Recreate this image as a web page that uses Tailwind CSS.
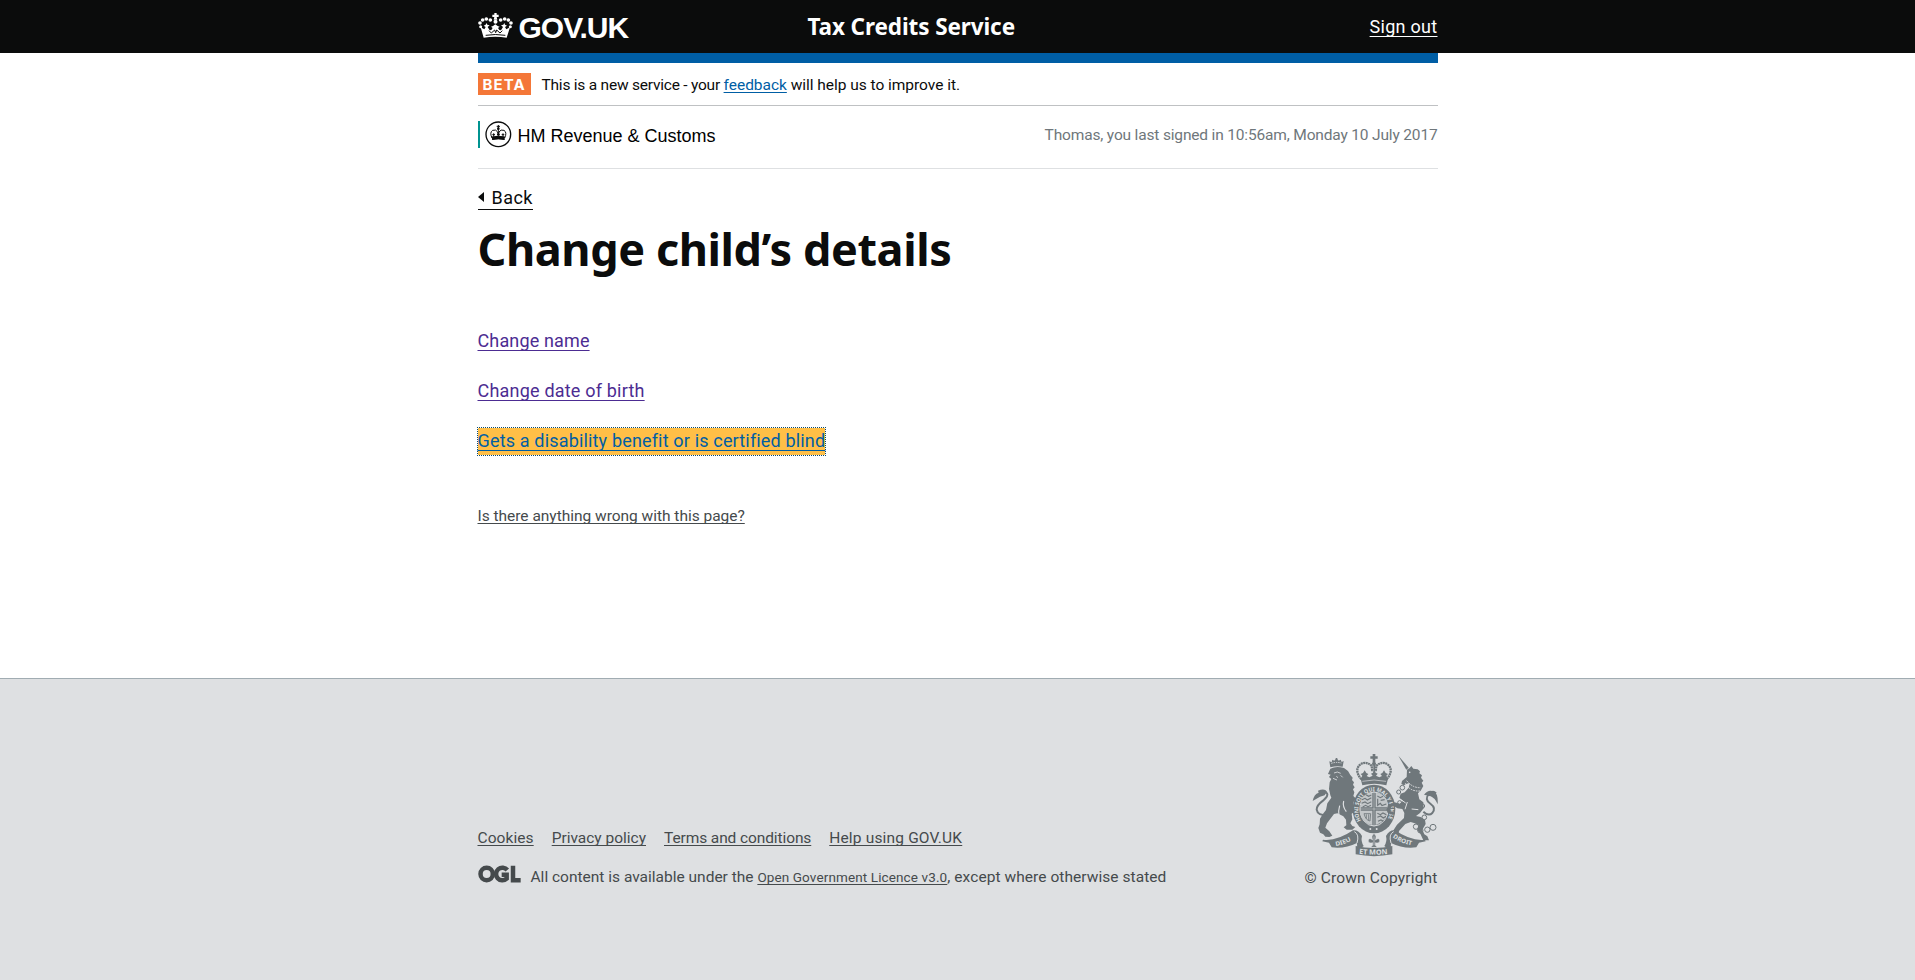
<!DOCTYPE html>
<html lang="en">
<head>
<meta charset="utf-8">
<title>Change child’s details</title>
<script src="https://cdn.jsdelivr.net/npm/@tailwindcss/browser@4"></script>
</head>
<body class="bg-white text-[#0b0c0c] font-[Roboto,sans-serif] text-[15.5px]">
<header class="bg-[#0b0c0c] text-white h-[53px]">
  <div class="w-[960px] mx-auto h-full flex items-center">
    <a class="w-[330px] flex items-center gap-[6px]">
      <svg class="w-[35px] h-[28px] shrink-0 -mt-px" viewBox="24 36 105 84" fill="#fff">
        <path d="M73 39h7v5h6v7h-6l2 8h-11l2-8h-6v-7h6z"/>
        <circle cx="76.500" cy="65" r="6"/>
        <circle cx="61" cy="60" r="5.500"/><circle cx="49" cy="57" r="5.500"/><circle cx="38" cy="60" r="5.500"/><circle cx="30" cy="69" r="5.500"/><circle cx="32" cy="80" r="4.500"/>
        <circle cx="92" cy="60" r="5.500"/><circle cx="104" cy="57" r="5.500"/><circle cx="115" cy="60" r="5.500"/><circle cx="123" cy="69" r="5.500"/><circle cx="121" cy="80" r="4.500"/>
        <path d="M32 82l11 6 4-7-6-4 6-3 2-5 3 5 7 2-6 5 6 10 5-1 4-6-5-4 6-2 7-5 7 5 6 2-5 4 4 6 5 1 6-10-6-5 7-2 3-5 2 5 6 3-6 4 4 7 11-6-10 31q-34-6-69 0z"/>
        <path d="M47 106q29-5 59 0M57 92l7 7 10-9 3 8 3-8 10 9 7-7" fill="none" stroke="#0b0c0c" stroke-width="3"/>
      </svg>
      <span class="font-[Liberation_Sans,sans-serif] font-bold text-[30px] leading-[30px] tracking-[-1px] pt-[2px]">GOV.UK</span>
    </a>
    <span class="font-['Noto_Sans',sans-serif] font-bold text-[22.5px] leading-[30px] tracking-[-0.1px]">Tax Credits Service</span>
    <a class="ml-auto text-[18px] tracking-[0.28px] underline decoration-1 underline-offset-[3px] [text-decoration-skip-ink:none]">Sign out</a>
  </div>
</header>

<div class="w-[960px] mx-auto">
  <div class="h-[10px] bg-[#005ea5]"></div>
  <div class="h-[43px] border-b border-[#bfc1c3] flex items-center">
    <strong class="bg-[#f47738] text-white font-[Inter,sans-serif] font-bold text-[15px] leading-[23px] h-[22px] w-[53px] pl-[5px] tracking-[1.1px]">BETA</strong>
    <p class="ml-[11px] leading-[20px] pt-px tracking-[-0.03px]"><span class="tracking-[-0.22px]">This is a new service - your </span><a class="text-[#005ea5] underline decoration-1 underline-offset-2 [text-decoration-skip-ink:none]">feedback</a> will help us to improve it.</p>
  </div>
  <div class="h-[63px] pb-[5px] border-b border-[#dee0e2] flex items-center justify-between">
    <div class="border-l-2 border-[#009390] h-[27px] pl-[5.5px] flex items-center gap-[5.5px]">
      <svg class="w-[27px] h-[27px]" viewBox="47 50 81 81">
        <circle cx="87" cy="90" r="37" fill="#fff" stroke="#0b0c0c" stroke-width="4"/>
        <g fill="none" stroke="#0b0c0c" stroke-width="3">
          <path d="M68 101q-8-17 2-23 10-4 15 5 1 5-1 10M106 101q8-17-2-23-10-4-15 5-1 5 1 10M87 62v30M82 66h10M68 98q19-4 38 0M68 105q19-4 38 0"/>
          <path d="M73 97v-10m-4 4h8M101 97v-10m-4 4h8M87 97v-10m-4 4h8"/>
        </g>
        <circle cx="87" cy="73" r="4" fill="#0b0c0c"/>
        <path d="M67 98q20-5 40 0l-2 9q-18-4-36 0z" fill="#0b0c0c"/>
      </svg>
      <span class="font-[Liberation_Sans,sans-serif] text-[18px] leading-[22px] pt-[2px] text-black">HM Revenue &amp; Customs</span>
    </div>
    <p class="pt-[2px] text-[#6f777b] tracking-[-0.165px]">Thomas, you last signed in 10:56am, Monday 10 July 2017</p>
  </div>

  <main class="h-[509px] pt-[17px]">
    <a class="inline-flex items-center h-[24px] border-b border-[#0b0c0c] text-[18px] leading-[23px] tracking-[0.45px]">
      <svg class="w-[6px] h-[10px] mr-[8px] -mt-px" viewBox="0 0 6 10"><path d="M6 0v10L0 5z" fill="#0b0c0c"/></svg>Back
    </a>
    <h1 class="mt-[14px] font-['Noto_Sans',sans-serif] font-bold text-[45px] leading-[50px] tracking-[-0.42px]">Change child’s details</h1>
    <ul class="mt-[54px] text-[18px] leading-[26px] text-[#4c2c92]">
      <li class="h-[50px]"><a class="tracking-[0.14px] underline decoration-1 underline-offset-[3px] [text-decoration-skip-ink:none]">Change name</a></li>
      <li class="h-[50px]"><a class="tracking-[0.2px] underline decoration-1 underline-offset-[3px] [text-decoration-skip-ink:none]">Change date of birth</a></li>
      <li class="h-[50px]"><a class="inline-block h-[27px] tracking-[0.165px] text-[#005ea5] bg-[#ffbf47] outline-1 outline-dotted outline-[#0b4a6f] underline decoration-1 underline-offset-[3px] [text-decoration-skip-ink:none]">Gets a disability benefit or is certified blind</a></li>
    </ul>
    <p class="mt-[28px] leading-[20px] text-[#454a4c]"><a class="tracking-[-0.02px] underline decoration-1 underline-offset-2 [text-decoration-skip-ink:none]">Is there anything wrong with this page?</a></p>
  </main>
</div>

<footer class="h-[302px] bg-[#dee0e2] border-t border-[#a1acb2] text-[#454a4c]">
  <div class="w-[960px] mx-auto flex justify-between pt-[74px]">
    <div class="pt-[75px]">
      <ul class="flex gap-[18px] leading-[20px] underline decoration-1 underline-offset-2 [text-decoration-skip-ink:none]">
        <li class="tracking-[0.08px]">Cookies</li>
        <li class="tracking-[-0.01px]">Privacy policy</li>
        <li class="tracking-[-0.1px]">Terms and conditions</li>
        <li class="tracking-[0.17px]">Help using GOV.UK</li>
      </ul>
      <div class="mt-[19px] flex items-center leading-[20px]">
        <svg class="w-[43px] h-[18px] -mt-[6px] mr-[10px]" viewBox="24 139 129 54" fill="none" stroke="#454a4c" stroke-width="13.500">
          <circle cx="50" cy="166" r="18.500"/>
          <path d="M112 154a19 19 0 1 0-2 26v-12h-15"/>
          <path d="M129 141v44h23"/>
        </svg>
        <p><span>All content is available under the </span><a class="text-[13.500px] tracking-[0.12px] underline decoration-1 underline-offset-2 [text-decoration-skip-ink:none]">Open Government Licence v3.0</a><span class="tracking-[0.06px]">, except where otherwise stated</span></p>
      </div>
    </div>
    <div class="flex flex-col items-end">
      <svg class="w-[126px] h-[104px]" viewBox="66 39 378 312" fill="#6f777b">
        <!-- crown -->
        <path d="M248 42h8v7h7v7h-7v10h-8V56h-7v-7h7z"/>
        <circle cx="252" cy="71" r="6"/>
        <path d="M214 118q-20-24-7-41 17-17 38 0l2 18M290 118q20-24 7-41-17-17-38 0l-2 18" fill="none" stroke="#6f777b" stroke-width="7" stroke-dasharray="6 1.500"/>
        <path d="M250 74h5v26h-5z"/>
        <path d="M212 116l5-9-5-5 7-3 5-8 5 8 6 3-5 6 8 4 10-5-5-6 6-3 4-7 4 7 6 3-5 6 10 5 8-4-5-6 6-3 5-8 5 8 7 3-5 5 5 9-5 20q-35-9-72 0z"/>
        <path d="M217 124q35-8 71 0" fill="none" stroke="#dee0e2" stroke-width="2"/>
        <!-- shield and garter -->
        <ellipse cx="252" cy="207" rx="64" ry="73"/>
        <ellipse cx="252" cy="207" rx="42" ry="51" fill="none" stroke="#dee0e2" stroke-width="3"/>
        <g fill="#c3c7c9"><path d="M215 174q15-17 32-16v44h-36zM257 158q24 3 34 22l3 22h-37zM210 212h37v43q-26-4-37-34zM257 212h37q-3 30-37 43z"/></g>
        <g fill="none" stroke="#6f777b" stroke-width="3.500">
          <path d="M216 179l9-4 7 5 12-7M215 190l10-4 8 5 11-6M218 201l9-5 7 4 9-4M228 164l8 5 8-4M262 168l9 5 8-4M263 176v20l8-6 5 7 13-5M272 181l12-2M262 220l9 4 8-5 10 5M262 232l10-4 8 6 8-5M264 244l9-4 7 4"/>
          <path d="M222 221q5 20 18 22l2-22zM229 223v13M236 223v17" stroke-width="2.500"/>
        </g>
        <path d="M252 155v103M209 207h86" stroke="#dee0e2" stroke-width="1.500"/>
        <path id="garter" d="M214 244A47 57 0 1 1 290 244" fill="none"/>
        <text font-family="Noto Sans, sans-serif" font-size="17" font-weight="700" fill="#dee0e2"><textPath href="#garter" startOffset="2" textLength="222" lengthAdjust="spacingAndGlyphs">HONI SOIT QUI MAL Y PENSE</textPath></text>
        <circle cx="241" cy="267" r="3" fill="#dee0e2"/><circle cx="260" cy="267" r="3" fill="#dee0e2"/>
        <!-- lion -->
        <path d="M121 82l-3-18 7 3 2-8 6 3 4-5v-3h5v3l4 5 6-3 3 7 6-3-3 17q-18-4-37 2z"/>
        <path d="M124 70q14-5 30-1" fill="none" stroke="#dee0e2" stroke-width="3" stroke-dasharray="4 3"/>
        <path d="M121 86q18-9 41-2l12 9 7 12 7 8-2 7 6 7-3 7 5 8-5 6 4 9-3 11 9 9q-9 4-10 18l4 21-8 5 2 17-6 12 6 8 9 3-9 8h-17l-9-7 8-6-1-17-8-10-18-9-10 2-21 28-5 13 12 11 9 13-9 4-12-1-6-7-10-5-5-14 4-11 1-17 8-13 10-13 4-20 12-17-3-7-4-19 2-20 5-10-7-6 5-7-8-2z"/>
        <path d="M132 99l10-3 10 4M139 109l5 4M129 115l12 5M152 106l6 6" stroke="#dee0e2" stroke-width="2.500" fill="none"/>
        <path d="M161 183q-4 17 8 32M149 197q-5 16-2 32" stroke="#dee0e2" stroke-width="3.500" fill="none"/>
        <path d="M110 226q-27 0-30-17 0-13 19-27 17-14 12-22-6-7-13-2" fill="none" stroke="#6f777b" stroke-width="6"/>
        <path d="M68 183q4-21 18-25l-2-6q20-9 27 3l-7 11-14 4z"/>
        <!-- unicorn -->
        <path d="M325 47l31 36-7 6z"/>
        <path d="M351 89l8-5 5-6 6 8 13 2 7 6-2 6 8 6-3 7 7 9-5 6 5 10-8 14-8 8 4 18 12 9 1 18-11 14-12 9 14 3 13 9 2 12-10 17 6 14 9 6 5 12h-17l-9-20-9-10 3-17-13-5-10-3-16 6-19 21-2 12-14 5-8-3 4-11 14-22 21-20 1-15-6-12-15-2-10-7-9 3-2 12 12 5-3 7-16-5-5-11 6-15 19-7 15 4 10-9-11-8 4-13 12-4 12-14 3-14-9 2-8 5-8-4 2-9 14-12z"/>
        <circle cx="359" cy="97" r="2.500" fill="#dee0e2"/>
        <path d="M346 130q14 25 44 23M350 122q17 22 42 21" fill="none" stroke="#dee0e2" stroke-width="3" stroke-dasharray="5 3"/>
        <path d="M327 175l20 14M352 186l-7 22M365 207l20 2" stroke="#dee0e2" stroke-width="3" fill="none"/>
        <path d="M400 215q16 15 27 4 12-15-5-27-21-14-4-31 11-10 20-1" fill="none" stroke="#6f777b" stroke-width="6"/>
        <path d="M402 164q14-18 30-9 13 5 11 38-8-19-21-24z"/>
        <g fill="none" stroke="#6f777b" stroke-width="3"><circle cx="337" cy="143" r="7"/><circle cx="326" cy="156" r="6"/><circle cx="329" cy="188" r="6"/><circle cx="398" cy="198" r="6"/><circle cx="403" cy="232" r="7"/><circle cx="378" cy="260" r="8"/><circle cx="391" cy="271" r="8"/><circle cx="412" cy="269" r="8"/><circle cx="429" cy="262" r="9"/></g>
        <!-- motto ribbon -->
        <path d="M99 299q42 5 90-28 17-2 27 17-4 16 5 30l-19 15-1-24q-36 18-76 13l-8-14-20-4z"/>
        <path d="M405 299q-42 5-90-28-17-2-27 17 4 16-5 30l19 15 1-24q36 18 76 13l8-14 20-4z"/>
        <path d="M193 275q16 8 8 34M311 275q-16 8-8 34" fill="none" stroke="#dee0e2" stroke-width="3"/>
        <path d="M197 318q55 12 110 0v25q-55 11-110 0z"/>
        <path id="mL" d="M137 318q28-3 56-23" fill="none"/><path id="mC" d="M207 341q46 6 92 0" fill="none"/><path id="mR" d="M308 292q27 20 66 25" fill="none"/>
        <g font-family="Noto Sans, sans-serif" font-size="18" font-weight="700" fill="#dee0e2">
          <text><textPath href="#mL" textLength="50" lengthAdjust="spacingAndGlyphs">DIEU</textPath></text>
          <text font-size="21"><textPath href="#mC" textLength="86" lengthAdjust="spacingAndGlyphs">ET MON</textPath></text>
          <text><textPath href="#mR" textLength="62" lengthAdjust="spacingAndGlyphs">DROIT</textPath></text>
        </g>
        <path d="M252 280q10 10 4 20 12-9 13 2 0 7-8 7l-5-1v8l6 6h-20l6-6v-8l-5 1q-8 0-8-7 1-11 13-2-6-10 4-20z" stroke="#dee0e2" stroke-width="1.500"/>
        <path d="M252 289v27" stroke="#dee0e2" stroke-width="2"/>
      </svg>
      <p class="mt-[11px] leading-[20px] tracking-[0.16px]">© Crown Copyright</p>
    </div>
  </div>
</footer>
</body>
</html>
